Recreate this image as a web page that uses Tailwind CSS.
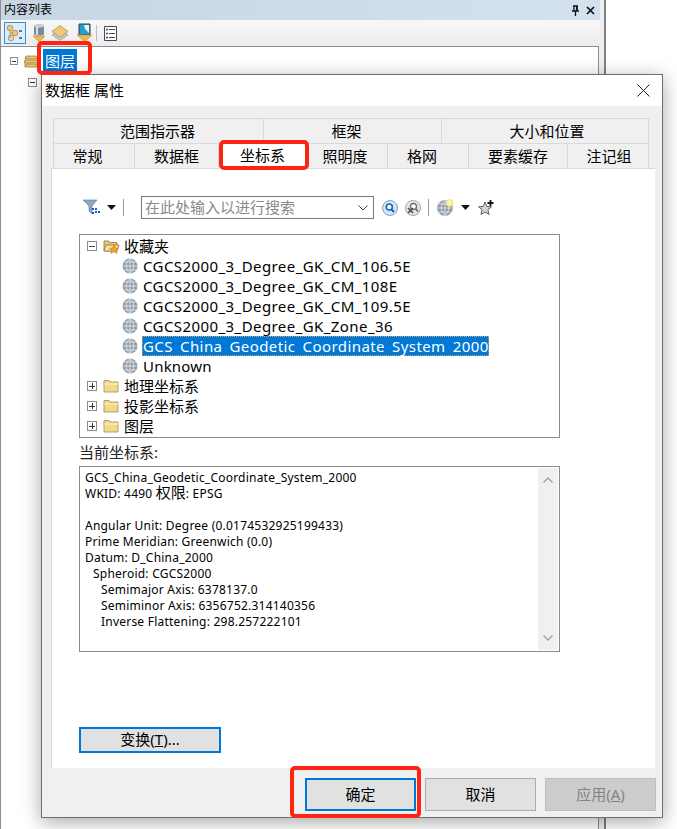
<!doctype html>
<html lang="zh-CN">
<head>
<meta charset="utf-8">
<title>数据框 属性</title>
<script src="https://cdn.jsdelivr.net/npm/@tailwindcss/browser@4"></script>
</head>
<body class="m-0 bg-white">
<div class="relative w-[677px] h-[829px] overflow-hidden bg-white text-[15px] text-black [font-family:'Noto_Sans','Noto_Sans_CJK_SC',sans-serif]">

  <!-- 内容列表 panel -->
  <div class="w-[606px] h-full flex flex-col border-l border-r-2 border-l-[#8a8f99] border-r-[#808080] bg-[#f0f0f0]">
    <div class="h-[20px] w-[599px] flex items-center justify-between pl-[3px] pr-[5px] bg-gradient-to-r from-[#c8d5e3] to-[#d4e1ef]">
      <span class="text-[12px] leading-none">内容列表</span>
      <span class="flex items-center gap-[6px]">
        <svg width="9" height="11" viewBox="0 0 9 11"><path d="M2 1h5M3 1v5M6 1v5M1 6h7M4.500 6v5" stroke="#111" stroke-width="1.300" fill="none"/><path d="M5 1.500h1.500v4H5z" fill="#111"/></svg>
        <svg width="9" height="9" viewBox="0 0 9 9"><path d="M1 1l7 7M8 1L1 8" stroke="#111" stroke-width="1.700"/></svg>
      </span>
    </div>
    <div class="h-[26px] w-[599px] flex items-center pl-[3px] bg-gradient-to-b from-[#f8f8f8] to-[#ececec]">
      <span class="w-[22px] h-[22px] flex items-center justify-center border border-[#3a8fd8] bg-[#dcecf9]">
        <svg width="18" height="18" viewBox="0 0 18 18"><circle cx="4" cy="4" r="2.800" fill="#f2c76e" stroke="#a67c2d" stroke-width=".7"/><circle cx="9" cy="9" r="2.800" fill="#f2c76e" stroke="#a67c2d" stroke-width=".7"/><circle cx="5" cy="14" r="2.800" fill="#ecd9a8" stroke="#a67c2d" stroke-width=".7"/><path d="M4 6v8M4 9h3" stroke="#888" stroke-width=".8" fill="none"/><path d="M13 7h3M13 14h3" stroke="#1c4f86" stroke-width="1.600"/></svg>
      </span>
      <svg class="ml-[5px]" width="16" height="20" viewBox="0 0 16 20"><path d="M3 3c0-2 10-2 10 0v8c0 2-10 2-10 0z" fill="#7b8a9a"/><ellipse cx="8" cy="3" rx="5" ry="1.700" fill="#c4ced8"/><path d="M6 3v9" stroke="#d6dde4" stroke-width="2"/><path d="M2 13h12l-6 6z" fill="#edb955" stroke="#b88a35" stroke-width=".6"/></svg>
      <svg class="ml-[4px]" width="18" height="18" viewBox="0 0 18 18"><path d="M1 11l8 5.500 8-5.500-8-4.500z" fill="#c9c9c9" stroke="#8b8b8b" stroke-width=".6"/><path d="M1 7.500L9 1.500l8 6L9 13.500z" fill="#f0c877" stroke="#a98540" stroke-width=".7"/></svg>
      <svg class="ml-[7px]" width="17" height="20" viewBox="0 0 17 20"><path d="M3 1h11v11H3z" fill="#1f9fce" stroke="#24445f" stroke-width="1"/><path d="M8 2h5v8L9 6z" fill="#f4f4f4"/><path d="M1 12h15l-7.500 7z" fill="#edb955" stroke="#b88a35" stroke-width=".6"/></svg>
      <span class="ml-[3px] w-px h-[16px] bg-[#bdbdbd]"></span>
      <svg class="ml-[7px]" width="13" height="15" viewBox="0 0 13 15"><path d="M.500.500h12v14H.500z" fill="#fff" stroke="#3c4c5c"/><path d="M5 3.500h6M5 7.500h6M5 11.500h6" stroke="#3c4c5c"/><circle cx="3" cy="3.500" r="1" fill="#444"/><circle cx="3" cy="7.500" r="1" fill="#444"/><circle cx="3" cy="11.500" r="1" fill="#444"/></svg>
    </div>
    <div class="w-[598px] flex-1 border-t border-r border-[#8a8f96] bg-gradient-to-b from-white to-white">
      <div class="h-[27px] flex items-center pl-[9px] pt-[1px]">
        <span class="w-[8px] h-[8px] flex items-center justify-center border border-[#8c8c8c]"><span class="w-[4px] h-px bg-[#333]"></span></span>
        <svg class="ml-[6px]" width="14" height="15" viewBox="0 0 14 15"><path d="M2 2h10l1 3H1zM1 6h12l1 3H0zM1 10h12v3H1z" fill="#edc56e" stroke="#94702a" stroke-width=".7"/></svg>
        <span class="ml-[5px] w-[34px] h-[24px] flex items-center justify-center bg-[#0078d7] text-white leading-none">图层</span>
      </div>
      <div class="mt-[1px] h-[14px] flex items-center pl-[27px]">
        <span class="w-[9px] h-[9px] flex items-center justify-center border border-[#8c8c8c]"><span class="w-[5px] h-px bg-[#333]"></span></span>
      </div>
    </div>
  </div>

  <!-- dialog window -->
  <div class="absolute left-[41px] top-[74px] w-[622px] h-[744px] flex flex-col border border-[#6f6f6f] bg-[#f0f0f0] shadow-[0_4px_18px_rgba(0,0,0,0.35)]">
    <div class="h-[31px] flex items-center justify-between pl-[3px] pr-[12px] bg-white">
      <span class="text-[15px] leading-none">数据框 属性</span>
      <svg width="13" height="13" viewBox="0 0 13 13"><path d="M.500.500l12 12M12.500.500l-12 12" stroke="#222" stroke-width="1"/></svg>
    </div>
    <div class="pt-[12px] pl-[11px]">
      <div class="w-[596px] h-[25px] flex text-center leading-[24px] border-t border-l border-[#d9d9d9]">
        <div class="w-[210px] border-r border-[#d9d9d9] pr-[2px]">范围指示器</div>
        <div class="w-[178px] border-r border-[#d9d9d9] pr-[12px]">框架</div>
        <div class="flex-1 border-r border-[#d9d9d9] pl-[4px]">大小和位置</div>
      </div>
      <div class="w-[596px] h-[25px] flex text-center leading-[25px] border-t border-l border-[#d9d9d9]">
        <div class="w-[81px] border-r border-[#d9d9d9] pr-[13px]">常规</div>
        <div class="w-[84px] border-r border-[#d9d9d9]">数据框</div>
        <div class="w-[87px] h-[26px] bg-white relative leading-[23px]">坐标系</div>
        <div class="w-[82px] border-x border-[#d9d9d9] pr-[4px]">照明度</div>
        <div class="w-[81px] border-r border-[#d9d9d9] pr-[12px]">格网</div>
        <div class="w-[99px] border-r border-[#d9d9d9]">要素缓存</div>
        <div class="flex-1 border-r border-[#d9d9d9] pl-[2px]">注记组</div>
      </div>
    </div>

    <div class="ml-[9px] w-[604px] h-[600px] bg-white border-l border-t border-[#d9d9d9] pl-[27px] pt-[27px]">
      <!-- search toolbar -->
      <div class="h-[23px] flex items-center">
        <svg class="ml-[4px]" width="17" height="17" viewBox="0 0 17 17"><path d="M0 1h14L9 7v8l-3-3V7z" fill="#8fa8bd" stroke="#5f7d94" stroke-width=".6"/><path d="M9 9h2v2H9zM12 9h2v2h-2zM12 12h2v2h-2zM9 13h2v2H9zM15 12h2v2h-2z" fill="#1565b8"/></svg>
        <svg class="ml-[7px]" width="9" height="5" viewBox="0 0 9 5"><path d="M0 0h9L4.500 5z" fill="#111"/></svg>
        <span class="ml-[7px] w-px h-[17px] bg-[#9a9a9a]"></span>
        <div class="ml-[17px] w-[233px] h-[23px] flex items-center justify-between border border-[#7a7a7a] pl-[3px] pr-[5px] text-[#8a8a8a] leading-none">
          <span>在此处输入以进行搜索</span>
          <svg width="10" height="6" viewBox="0 0 10 6"><path d="M.500.500L5 5 9.500.500" stroke="#444" fill="none"/></svg>
        </div>
        <svg class="ml-[8px]" width="16" height="16" viewBox="0 0 16 16"><circle cx="8" cy="8" r="7.500" fill="#cfe6f7" stroke="#6fa8d6"/><circle cx="7.300" cy="7" r="3" fill="#fff" stroke="#1a5fae" stroke-width="1.500"/><path d="M9.500 9.500L12 12" stroke="#1a5fae" stroke-width="2"/></svg>
        <svg class="ml-[7px]" width="16" height="16" viewBox="0 0 16 16"><circle cx="8" cy="8" r="7.500" fill="#e6e6e6" stroke="#a4a4a4"/><circle cx="8.500" cy="6.500" r="3" fill="#fff" stroke="#707070" stroke-width="1.400"/><path d="M11 9l2 2.500" stroke="#707070" stroke-width="2"/><path d="M3 8l5 5M8 8l-5 5" stroke="#4a4a4a" stroke-width="1.600"/></svg>
        <span class="ml-[7px] w-px h-[17px] bg-[#9a9a9a]"></span>
        <svg class="ml-[8px]" width="17" height="17" viewBox="0 0 17 17"><circle cx="8" cy="9" r="7.500" fill="#8f9ba8" stroke="#7b8894" stroke-width=".6"/><path d="M.500 9h15M8 1.500v15M2 5h12M2 13h12M8 1.500c-5 4-5 11 0 15M8 1.500c5 4 5 11 0 15" stroke="#e8ecef" stroke-width=".8" fill="none"/><circle cx="12.500" cy="4" r="3.400" fill="#fff3a8" stroke="#e8cf55" stroke-width=".6"/></svg>
        <svg class="ml-[7px]" width="9" height="5" viewBox="0 0 9 5"><path d="M0 0h9L4.500 5z" fill="#111"/></svg>
        <svg class="ml-[8px]" width="16" height="16" viewBox="0 0 16 16"><path d="M7 2l1.800 4.500 4.700.3-3.600 3 1.200 4.700L7 12l-4.100 2.500 1.200-4.700-3.600-3 4.700-.3z" fill="#d4d4d4" stroke="#5f5f5f"/><path d="M12.500 0v6M9.500 3h6" stroke="#111" stroke-width="1.800"/></svg>
      </div>

      <!-- tree -->
      <div class="mt-[15px] w-[481px] h-[204px] border border-[#8a8a8a] pt-px text-[15px]">
        <div class="h-[20px] flex items-center pl-[7px]">
          <span class="w-[10px] h-[10px] flex items-center justify-center border border-[#8c8c8c]"><span class="w-[6px] h-px bg-[#444]"></span></span>
          <svg class="ml-[6px]" width="17" height="15" viewBox="0 0 17 15"><path d="M1 2h5l1 1.500h7V12H1z" fill="#e3c676" stroke="#8f7a3a" stroke-width=".8"/><path d="M3 6h13l-2 6H1z" fill="#f3e2a8" stroke="#8f7a3a" stroke-width=".8"/><path d="M11 6l1.500 3 3 .3-2.200 2.100.7 3-3-1.600-3 1.600.7-3-2.200-2.100 3-.3z" fill="#f5a623" stroke="#c8641a" stroke-width=".5"/></svg>
          <span class="ml-[4px] leading-none">收藏夹</span>
        </div>
        <div class="h-[20px] flex items-center pl-[42px]">
          <svg width="16" height="16" viewBox="0 0 16 16"><circle cx="8" cy="8" r="7.500" fill="#8f9ba8"/><path d="M.500 8h15M8 .500v15M2 4h12M2 12h12M8 .500c-5 4-5 11 0 15M8 .500c5 4 5 11 0 15" stroke="#e8ecef" stroke-width=".8" fill="none"/></svg>
          <span class="ml-[5px] tracking-[0.42px] leading-none">CGCS2000_3_Degree_GK_CM_106.5E</span>
        </div>
        <div class="h-[20px] flex items-center pl-[42px]">
          <svg width="16" height="16" viewBox="0 0 16 16"><circle cx="8" cy="8" r="7.500" fill="#8f9ba8"/><path d="M.500 8h15M8 .500v15M2 4h12M2 12h12M8 .500c-5 4-5 11 0 15M8 .500c5 4 5 11 0 15" stroke="#e8ecef" stroke-width=".8" fill="none"/></svg>
          <span class="ml-[5px] tracking-[0.42px] leading-none">CGCS2000_3_Degree_GK_CM_108E</span>
        </div>
        <div class="h-[20px] flex items-center pl-[42px]">
          <svg width="16" height="16" viewBox="0 0 16 16"><circle cx="8" cy="8" r="7.500" fill="#8f9ba8"/><path d="M.500 8h15M8 .500v15M2 4h12M2 12h12M8 .500c-5 4-5 11 0 15M8 .500c5 4 5 11 0 15" stroke="#e8ecef" stroke-width=".8" fill="none"/></svg>
          <span class="ml-[5px] tracking-[0.42px] leading-none">CGCS2000_3_Degree_GK_CM_109.5E</span>
        </div>
        <div class="h-[20px] flex items-center pl-[42px]">
          <svg width="16" height="16" viewBox="0 0 16 16"><circle cx="8" cy="8" r="7.500" fill="#8f9ba8"/><path d="M.500 8h15M8 .500v15M2 4h12M2 12h12M8 .500c-5 4-5 11 0 15M8 .500c5 4 5 11 0 15" stroke="#e8ecef" stroke-width=".8" fill="none"/></svg>
          <span class="ml-[5px] tracking-[0.42px] leading-none">CGCS2000_3_Degree_GK_Zone_36</span>
        </div>
        <div class="h-[20px] flex items-center pl-[42px]">
          <svg width="16" height="16" viewBox="0 0 16 16"><circle cx="8" cy="8" r="7.500" fill="#8f9ba8"/><path d="M.500 8h15M8 .500v15M2 4h12M2 12h12M8 .500c-5 4-5 11 0 15M8 .500c5 4 5 11 0 15" stroke="#e8ecef" stroke-width=".8" fill="none"/></svg>
          <span class="ml-[4px] w-[347px] h-[20px] flex items-center border border-dotted border-[#e0a050] bg-[#0078d7] text-white tracking-[0.42px] leading-none whitespace-pre">GCS<span class="text-transparent">_</span>China<span class="text-transparent">_</span>Geodetic<span class="text-transparent">_</span>Coordinate<span class="text-transparent">_</span>System<span class="text-transparent">_</span>2000</span>
        </div>
        <div class="h-[20px] flex items-center pl-[42px]">
          <svg width="16" height="16" viewBox="0 0 16 16"><circle cx="8" cy="8" r="7.500" fill="#8f9ba8"/><path d="M.500 8h15M8 .500v15M2 4h12M2 12h12M8 .500c-5 4-5 11 0 15M8 .500c5 4 5 11 0 15" stroke="#e8ecef" stroke-width=".8" fill="none"/></svg>
          <span class="ml-[5px] tracking-[0.2px] leading-none">Unknown</span>
        </div>
        <div class="h-[20px] flex items-center pl-[7px]">
          <span class="w-[10px] h-[10px] flex items-center justify-center border border-[#8c8c8c] relative"><span class="w-[6px] h-px bg-[#335]"></span><span class="absolute w-px h-[6px] bg-[#335]"></span></span>
          <svg class="ml-[6px]" width="16" height="14" viewBox="0 0 16 14"><path d="M1 1.500h5l1 1.500h8v10H1z" fill="#f0d98a" stroke="#a48f4b" stroke-width=".8"/><path d="M1 5h14" stroke="#fff6c8"/></svg>
          <span class="ml-[5px] leading-none">地理坐标系</span>
        </div>
        <div class="h-[20px] flex items-center pl-[7px]">
          <span class="w-[10px] h-[10px] flex items-center justify-center border border-[#8c8c8c] relative"><span class="w-[6px] h-px bg-[#335]"></span><span class="absolute w-px h-[6px] bg-[#335]"></span></span>
          <svg class="ml-[6px]" width="16" height="14" viewBox="0 0 16 14"><path d="M1 1.500h5l1 1.500h8v10H1z" fill="#f0d98a" stroke="#a48f4b" stroke-width=".8"/><path d="M1 5h14" stroke="#fff6c8"/></svg>
          <span class="ml-[5px] leading-none">投影坐标系</span>
        </div>
        <div class="h-[20px] flex items-center pl-[7px]">
          <span class="w-[10px] h-[10px] flex items-center justify-center border border-[#8c8c8c] relative"><span class="w-[6px] h-px bg-[#335]"></span><span class="absolute w-px h-[6px] bg-[#335]"></span></span>
          <svg class="ml-[6px]" width="16" height="14" viewBox="0 0 16 14"><path d="M1 1.500h5l1 1.500h8v10H1z" fill="#f0d98a" stroke="#a48f4b" stroke-width=".8"/><path d="M1 5h14" stroke="#fff6c8"/></svg>
          <span class="ml-[5px] leading-none">图层</span>
        </div>
      </div>

      <div class="h-[28px] flex items-center text-[15px] text-[#222] leading-none">当前坐标系:</div>

      <div class="w-[481px] h-[186px] border border-[#8a8a8a] flex justify-between p-px">
        <div class="pl-[4px] pt-[2px] text-[12px] leading-[16px] tracking-[0.22px] whitespace-nowrap">
          <div class="h-[16px]">GCS_China_Geodetic_Coordinate_System_2000</div>
          <div class="h-[16px]">WKID: 4490 <span class="text-[15px] leading-[10px] tracking-normal">权限</span>: EPSG</div>
          <div class="h-[16px]"></div>
          <div class="h-[16px]">Angular Unit: Degree (0.0174532925199433)</div>
          <div class="h-[16px]">Prime Meridian: Greenwich (0.0)</div>
          <div class="h-[16px]">Datum: D_China_2000</div>
          <div class="h-[16px] pl-[8px]">Spheroid: CGCS2000</div>
          <div class="h-[16px] pl-[16px]">Semimajor Axis: 6378137.0</div>
          <div class="h-[16px] pl-[16px]">Semiminor Axis: 6356752.314140356</div>
          <div class="h-[16px] pl-[16px]">Inverse Flattening: 298.257222101</div>
        </div>
        <div class="w-[20px] h-full bg-[#f0f0f0] flex flex-col items-center justify-between py-[9px]">
          <svg width="10" height="6" viewBox="0 0 10 6"><path d="M.500 5.500L5 1l4.500 4.500" stroke="#a6a6a6" stroke-width="1.500" fill="none"/></svg>
          <svg width="10" height="6" viewBox="0 0 10 6"><path d="M.500.500L5 5 9.500.500" stroke="#a6a6a6" stroke-width="1.500" fill="none"/></svg>
        </div>
      </div>

      <button class="mt-[75px] block w-[142px] h-[26px] border-2 border-[#0078d7] bg-[#e1e1e1] text-[15px] leading-none pb-[2px]">变换(<span class="underline">T</span>)...</button>
    </div>

    <div class="flex-1 flex justify-end items-start gap-[9px] pt-[10px] pr-[6px] text-[15px]">
      <button class="w-[111px] h-[33px] border-2 border-[#0078d7] bg-[#e1e1e1]">确定</button>
      <button class="w-[111px] h-[33px] border border-[#adadad] bg-[#e1e1e1]">取消</button>
      <button class="w-[111px] h-[33px] border border-[#bfbfbf] bg-[#cccccc] text-[#838383]">应用(<span class="underline">A</span>)</button>
    </div>
  </div>

  <!-- red annotation boxes -->
  <div class="absolute left-[37px] top-[41px] w-[55px] h-[34px] border-[4px] border-[#ff2412] rounded-[5px]"></div>
  <div class="absolute left-[219px] top-[140px] w-[90px] h-[30px] border-[4px] border-[#ff2412] rounded-[5px]"></div>
  <div class="absolute left-[290px] top-[766px] w-[131px] h-[52px] border-[4px] border-[#ff2412] rounded-[5px]"></div>
</div>
</body>
</html>
